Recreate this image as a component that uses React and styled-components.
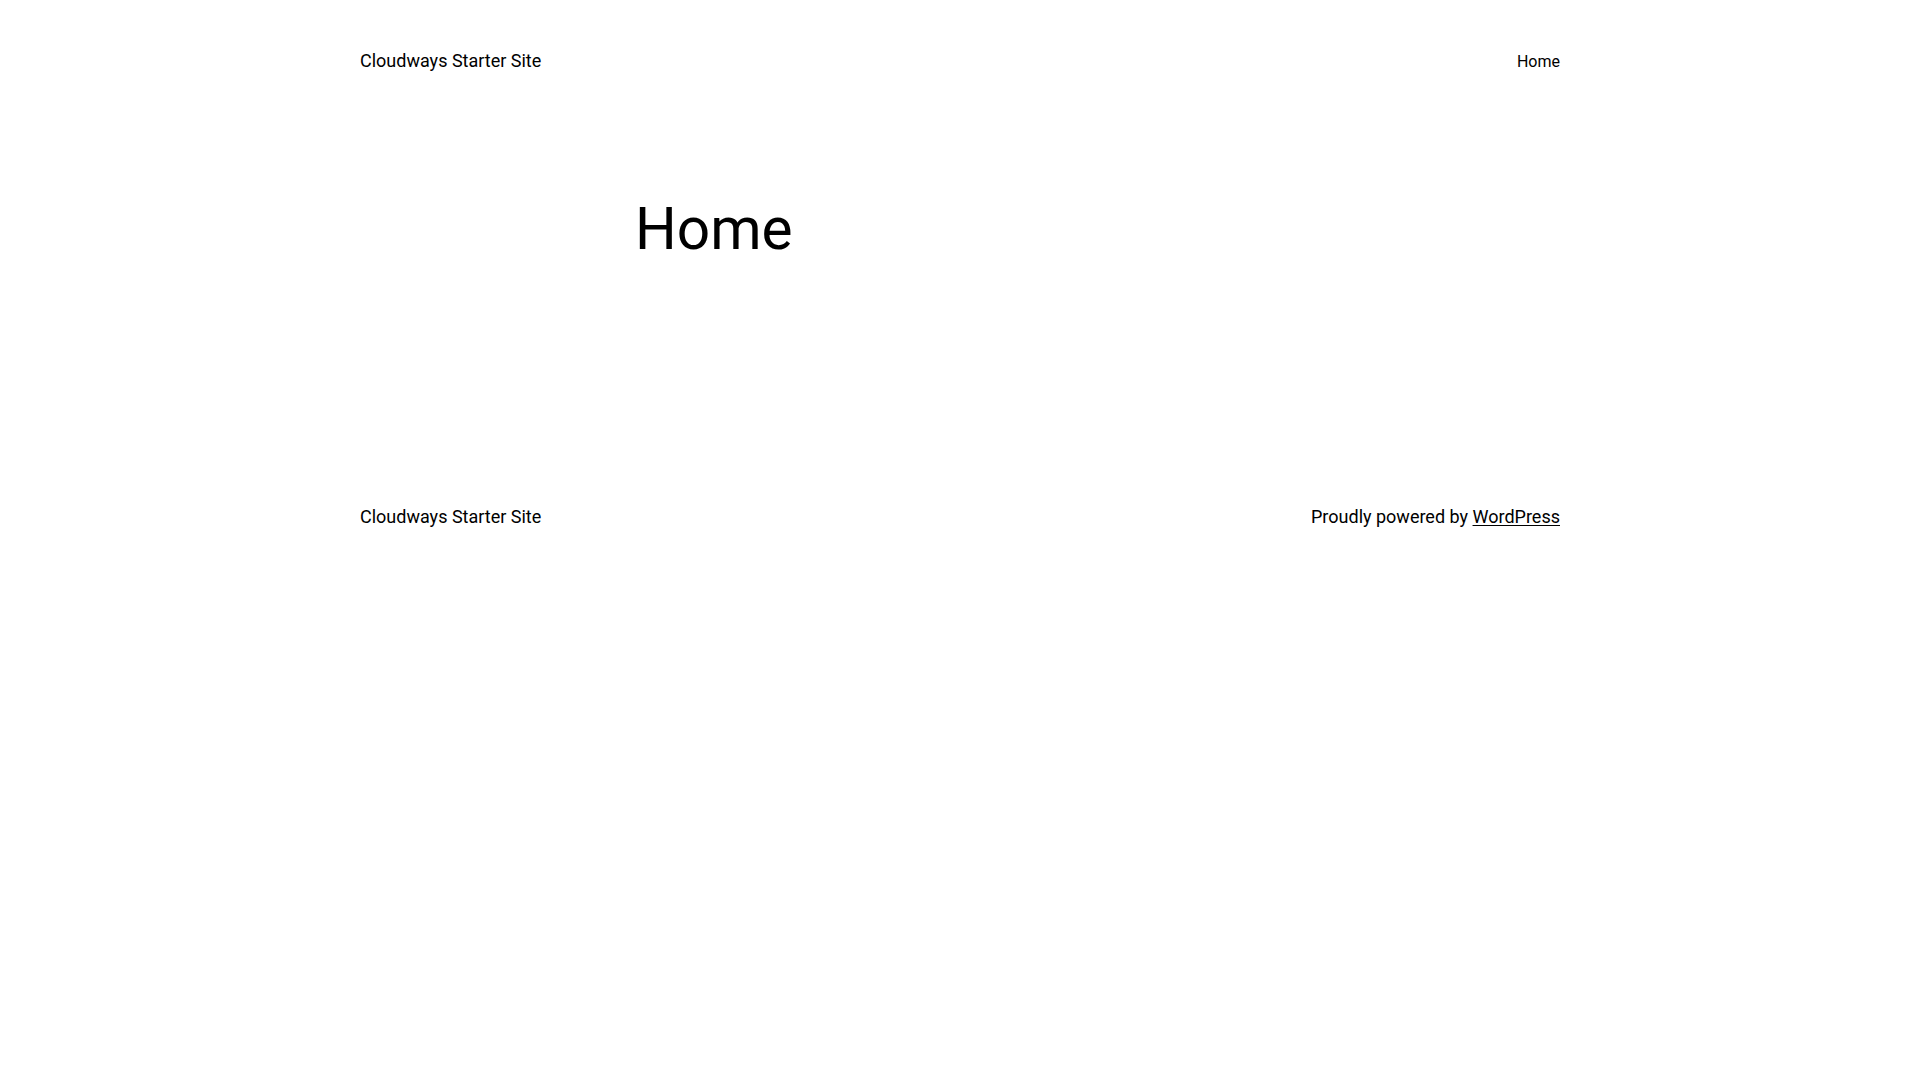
import React from "react";
import styled, { createGlobalStyle } from "styled-components";

const Global = createGlobalStyle`
  html, body { margin: 0; padding: 0; background: #fff; }
  body { font-family: Roboto, "Liberation Sans", sans-serif; color: #000; -webkit-font-smoothing: antialiased; }
  * { box-sizing: border-box; }
`;

const Page = styled.div`
  display: flex;
  flex-direction: column;
  min-height: 1080px;
`;

const Bar = styled.div`
  width: 1200px;
  margin: 0 auto;
  display: flex;
  justify-content: space-between;
  align-items: center;
  padding: ${(p) => p.$pad};
`;

const SiteTitle = styled.p`
  margin: 0;
  font-size: 18px;
  line-height: 1.6;
`;

const NavLink = styled.a`
  font-size: 16px;
  line-height: 1.6;
  color: #000;
  text-decoration: none;
`;

const Main = styled.main`
  width: 650px;
  margin: 0 auto;
  padding: 118px 0 239px;
`;

const Title = styled.h1`
  margin: 0;
  font-size: 58.6px;
  font-weight: 400;
  line-height: 1.2;
`;

const Credit = styled.p`
  margin: 0;
  font-size: 18px;
  line-height: 1.6;
`;

const CreditLink = styled.a`
  color: #000;
  text-decoration: underline;
  text-underline-offset: 2px;
`;

export default function App() {
  return (
    <>
      <Global />
      <Page>
        <Bar as="header" $pad="47px 0 0">
          <SiteTitle>Cloudways Starter Site</SiteTitle>
          <nav>
            <NavLink href="#">Home</NavLink>
          </nav>
        </Bar>
        <Main>
          <Title>Home</Title>
        </Main>
        <Bar as="footer" $pad="0">
          <SiteTitle>Cloudways Starter Site</SiteTitle>
          <Credit>
            Proudly powered by <CreditLink href="#">WordPress</CreditLink>
          </Credit>
        </Bar>
      </Page>
    </>
  );
}
